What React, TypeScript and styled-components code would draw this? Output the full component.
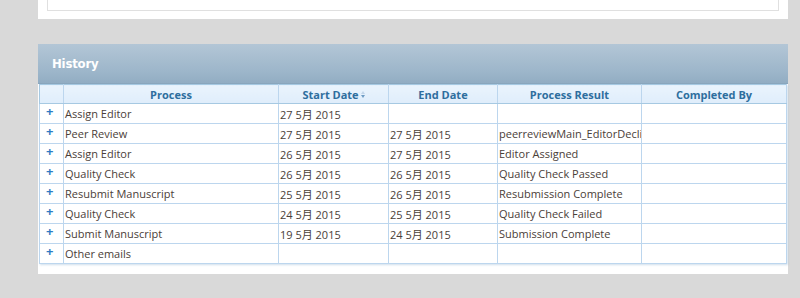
import React from 'react';
import styled, { createGlobalStyle } from 'styled-components';

const GlobalStyle = createGlobalStyle`
  html, body {
    margin: 0;
    padding: 0;
    background: #d9d9d9;
  }
  body {
    font-family: "Open Sans", "Noto Sans CJK SC", sans-serif;
  }
`;

const Page = styled.div`
  width: 750px;
  padding-left: 38px;
`;

const TopPanel = styled.div`
  background: #fff;
  padding: 0 9px 8px 9px;
`;

const TopBox = styled.div`
  height: 10px;
  border: 1px solid #e0e0e0;
  border-top: none;
`;

const HistoryPanel = styled.section`
  margin-top: 25px;
  background: #fff;
  padding: 0 2px 10px 1px;
`;

const PanelHeader = styled.header`
  height: 40px;
  margin: 0 -2px 0 -1px;
  display: flex;
  align-items: center;
  padding-left: 14px;
  background: linear-gradient(to bottom, #b3c6d6 0%, #9db6ca 70%, #92adc3 100%);
  border-bottom: 1px solid #8aa6bd;
  box-sizing: border-box;
`;

const Title = styled.h2`
  margin: 0;
  font-family: "DejaVu Sans Condensed", "Open Sans", sans-serif;
  font-size: 13px;
  font-weight: bold;
  color: #fff;
  letter-spacing: -0.2px;
`;

const Table = styled.table`
  width: 747px;
  border-collapse: collapse;
  table-layout: fixed;
  border: 1px solid #a6c9e2;
  font-size: 11px;
  box-shadow: 1px 1px 2px rgba(120, 160, 200, 0.35);
`;

const Col = styled.col<{ $w: number }>`
  width: ${(p) => p.$w}px;
`;

const HeadCell = styled.th`
  height: 16px;
  padding: 2px 0 0 0;
  line-height: 14px;
  border-right: 1px solid #bcd6ee;
  border-bottom: 1px solid #a6c9e2;
  background: linear-gradient(to bottom, #eaf4fd 0%, #dfedfb 100%);
  color: #2e6e9e;
  font-weight: bold;
  text-align: center;
  white-space: nowrap;
  overflow: hidden;
`;

const SortIcon = styled.span`
  display: inline-flex;
  flex-direction: column;
  vertical-align: 5px;
  margin-left: 2px;
  gap: 1px;
`;

const Tri = styled.span<{ $up?: boolean; $on?: boolean }>`
  width: 0;
  height: 0;
  border-left: 2.5px solid transparent;
  border-right: 2.5px solid transparent;
  ${(p) => (p.$up ? 'border-bottom' : 'border-top')}: 3px solid ${(p) => (p.$on ? '#6e9cc4' : '#c3d7ea')};
`;

const Row = styled.tr`
  height: 20px;
`;

const Cell = styled.td`
  padding: 0 1px;
  border: 1px solid #bcd6ee;
  color: #4a4038;
  white-space: nowrap;
  overflow: hidden;
  vertical-align: middle;
`;

const ExpandCell = styled(Cell)`
  padding: 0 0 0 6px;
  color: #2e7bc4;
  font-weight: bold;
  font-size: 13px;
  vertical-align: top;
  line-height: 14px;
`;

const rows = [
  ['Assign Editor', '27 5月 2015', '', ''],
  ['Peer Review', '27 5月 2015', '27 5月 2015', 'peerreviewMain_EditorDeclined'],
  ['Assign Editor', '26 5月 2015', '27 5月 2015', 'Editor Assigned'],
  ['Quality Check', '26 5月 2015', '26 5月 2015', 'Quality Check Passed'],
  ['Resubmit Manuscript', '25 5月 2015', '26 5月 2015', 'Resubmission Complete'],
  ['Quality Check', '24 5月 2015', '25 5月 2015', 'Quality Check Failed'],
  ['Submit Manuscript', '19 5月 2015', '24 5月 2015', 'Submission Complete'],
  ['Other emails', '', '', ''],
];

export default function App() {
  return (
    <>
      <GlobalStyle />
      <Page>
        <TopPanel>
          <TopBox />
        </TopPanel>
        <HistoryPanel>
          <PanelHeader>
            <Title>History</Title>
          </PanelHeader>
          <Table>
            <colgroup>
              <Col $w={24} />
              <Col $w={215} />
              <Col $w={110} />
              <Col $w={109} />
              <Col $w={144} />
              <Col $w={145} />
            </colgroup>
            <thead>
              <tr>
                <HeadCell />
                <HeadCell>Process</HeadCell>
                <HeadCell>
                  Start Date
                  <SortIcon>
                    <Tri $up />
                    <Tri $on />
                  </SortIcon>
                </HeadCell>
                <HeadCell>End Date</HeadCell>
                <HeadCell>Process Result</HeadCell>
                <HeadCell>Completed By</HeadCell>
              </tr>
            </thead>
            <tbody>
              {rows.map((r, i) => (
                <Row key={i}>
                  <ExpandCell>+</ExpandCell>
                  <Cell>{r[0]}</Cell>
                  <Cell>{r[1]}</Cell>
                  <Cell>{r[2]}</Cell>
                  <Cell>{r[3]}</Cell>
                  <Cell />
                </Row>
              ))}
            </tbody>
          </Table>
        </HistoryPanel>
      </Page>
    </>
  );
}
